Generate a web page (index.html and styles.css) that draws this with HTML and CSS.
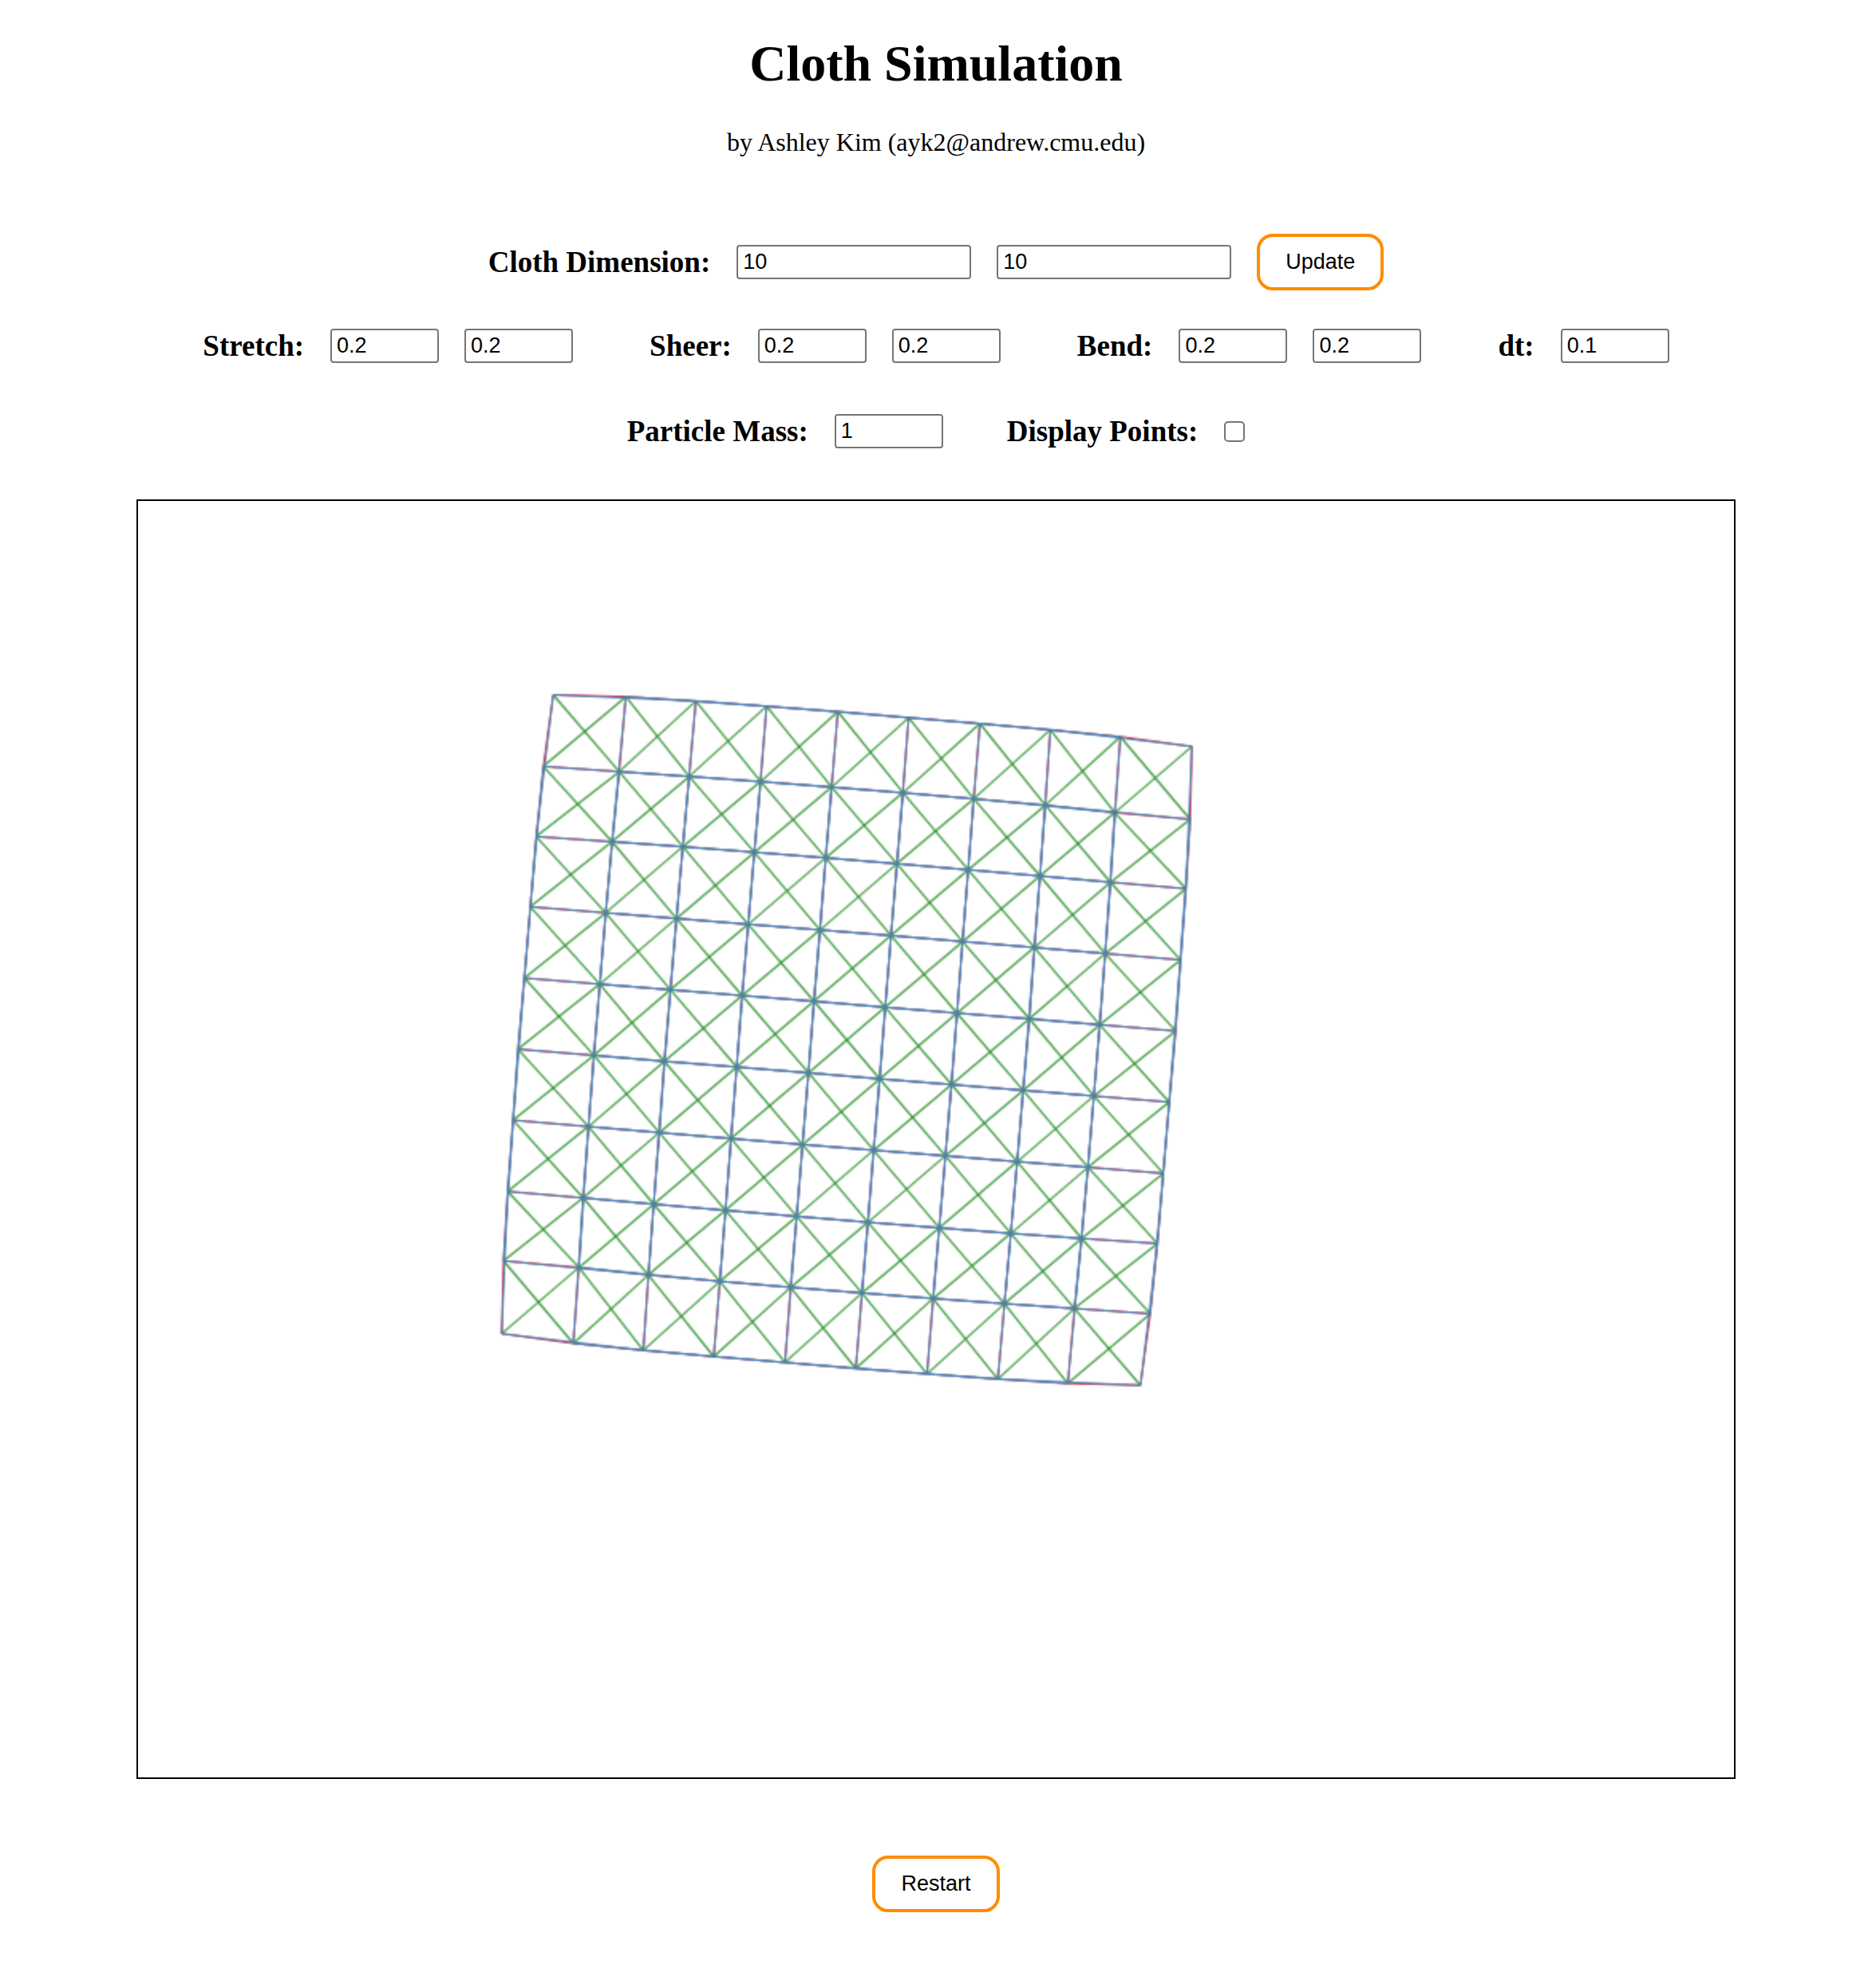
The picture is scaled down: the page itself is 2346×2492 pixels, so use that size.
FILE: index.html
```html
<!DOCTYPE html>
<html lang="en">
<head>
  <meta charset="utf-8">
  <meta name="viewport" content="width=device-width, initial-scale=1">
  <title>Cloth Simulation</title>
  <link rel="stylesheet" href="styles.css">
</head>
<body>
  <header class="header">
    <h1 class="title">Cloth Simulation</h1>
    <p class="byline">by Ashley Kim (ayk2@andrew.cmu.edu)</p>
  </header>

  <main class="main">
    <form class="controls" onsubmit="return false">
      <div class="row">
        <div class="group">
          <label class="label" for="cols">Cloth Dimension:</label>
          <input class="field field-wide" id="cols" type="text" value="10">
          <input class="field field-wide" id="rows" type="text" value="10" aria-label="Cloth rows">
          <button class="button" type="button">Update</button>
        </div>
      </div>

      <div class="row row-springs">
        <div class="group">
          <label class="label" for="stretch-k">Stretch:</label>
          <input class="field" id="stretch-k" type="text" value="0.2">
          <input class="field" id="stretch-d" type="text" value="0.2" aria-label="Stretch damping">
        </div>
        <div class="group">
          <label class="label" for="sheer-k">Sheer:</label>
          <input class="field" id="sheer-k" type="text" value="0.2">
          <input class="field" id="sheer-d" type="text" value="0.2" aria-label="Sheer damping">
        </div>
        <div class="group">
          <label class="label" for="bend-k">Bend:</label>
          <input class="field" id="bend-k" type="text" value="0.2">
          <input class="field" id="bend-d" type="text" value="0.2" aria-label="Bend damping">
        </div>
        <div class="group">
          <label class="label" for="dt">dt:</label>
          <input class="field" id="dt" type="text" value="0.1">
        </div>
      </div>

      <div class="row row-particles">
        <div class="group">
          <label class="label" for="mass">Particle Mass:</label>
          <input class="field" id="mass" type="text" value="1">
        </div>
        <div class="group">
          <label class="label" for="points">Display Points:</label>
          <input class="checkbox" id="points" type="checkbox">
        </div>
      </div>
    </form>

    <canvas class="stage" id="stage" width="1000" height="800"></canvas>

    <button class="button" type="button">Restart</button>
  </main>

  <script src="cloth.js"></script>
</body>
</html>
```

FILE: styles.css
```css
*,
*::before,
*::after {
  box-sizing: border-box;
}

body {
  margin: 0;
  background: #fff;
  color: #000;
  font-family: "Liberation Serif", "Times New Roman", serif;
  font-size: 32px;
}

.header {
  padding-top: 43px;
  text-align: center;
}

.title {
  margin: 0 0 43px;
  font-size: 64px;
  line-height: 74px;
}

.byline {
  margin: 0 0 96px;
  line-height: 37px;
}

.main {
  display: flex;
  flex-direction: column;
  align-items: center;
  padding: 0 16px 96px;
}

.controls {
  display: flex;
  flex-direction: column;
  gap: 48px;
  margin-bottom: 64px;
}

.row {
  display: flex;
  flex-wrap: wrap;
  justify-content: center;
  gap: 32px 96px;
}

.row-springs {
  margin-bottom: 16px;
}

.row-particles {
  column-gap: 80px;
}

.group {
  display: flex;
  flex-wrap: wrap;
  align-items: center;
  gap: 32px;
}

.label {
  padding-right: 1px;
  font-size: 37px;
  font-weight: bold;
  line-height: 43px;
}

.field {
  width: 136px;
  height: 43px;
  padding: 0 6px;
  border: 2px solid #767676;
  border-radius: 4px;
  background: #fff;
  color: #000;
  font-family: "Liberation Sans", Arial, sans-serif;
  font-size: 27px;
}

.field-wide {
  width: 294px;
}

.checkbox {
  appearance: none;
  width: 26px;
  height: 26px;
  margin: 0;
  border: 2px solid #767676;
  border-radius: 5px;
  background: #fff;
}

.checkbox:checked {
  border-color: #0075ff;
  background: #0075ff;
}

.button {
  padding: 16px 32px;
  border: 4px solid #ff8c00;
  border-radius: 20px;
  background: #fff;
  color: #000;
  font-family: "Liberation Sans", Arial, sans-serif;
  font-size: 27px;
  line-height: 31px;
}

.stage {
  width: 100%;
  max-width: 2004px;
  height: auto;
  margin-bottom: 96px;
  border: 2px solid #000;
}
```

FILE: cloth.js
```javascript
// Particle positions of the upper half of the cloth, one array per row,
// in half canvas units. The lower half is its point reflection.
const upper = [
  [[520.3,243],[611.3,245.3],[699,250.7],[787.7,257.3],[877,264],[965.7,271.7],[1055,279],[1143.3,286.7],[1231,295.5],[1320.7,307.7]],
  [[508,332.7],[603,339.3],[690.7,345.3],[780.3,351.7],[869.3,358.7],[958.7,365.7],[1047.3,373.3],[1137,381.3],[1224,390.7],[1318.5,399]],
  [[499,420.7],[594,427],[682.7,433.3],[772.3,440.3],[861.7,447.3],[951,454.7],[1040.3,462.3],[1130.3,470],[1218.7,478],[1313.3,486]],
  [[491.7,508.7],[586,516.3],[674.7,523.3],[764.7,530.7],[854.7,537.7],[943.7,544.7],[1033.3,552.3],[1123.3,559.7],[1212,567.3],[1306.3,575.3]],
  [[484.3,598],[578.7,605.7],[667.3,612.7],[757,620],[847,627],[936.3,634.7],[1026.3,642],[1117,649],[1205.3,656.7],[1300.3,664.3]]
];

const lower = upper
  .map(row => row.map(([x, y]) => [1776.5 - x, 1351.5 - y]).reverse())
  .reverse();
const grid = upper.concat(lower);
const size = grid.length;

const ctx = document.getElementById("stage").getContext("2d");

function spring(r1, c1, r2, c2) {
  if (r2 >= size || c2 >= size || c2 < 0) return;
  const [x1, y1] = grid[r1][c1];
  const [x2, y2] = grid[r2][c2];
  ctx.beginPath();
  ctx.moveTo(x1 / 2, y1 / 2);
  ctx.lineTo(x2 / 2, y2 / 2);
  ctx.stroke();
}

function drawSprings(color, width, alpha, offsets) {
  ctx.strokeStyle = color;
  ctx.lineWidth = width;
  ctx.globalAlpha = alpha;
  for (let r = 0; r < size; r++) {
    for (let c = 0; c < size; c++) {
      for (const [dr, dc] of offsets) spring(r, c, r + dr, c + dc);
    }
  }
}

drawSprings("crimson", 1, 1, [[0, 1], [1, 0]]);
drawSprings("forestgreen", 1.25, 0.8, [[1, 1], [1, -1]]);
drawSprings("steelblue", 1, 1, [[0, 2], [2, 0]]);
```
